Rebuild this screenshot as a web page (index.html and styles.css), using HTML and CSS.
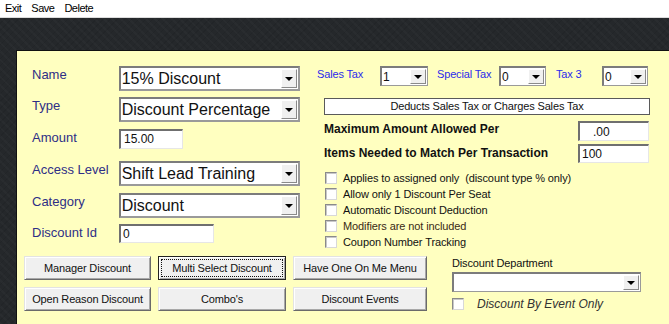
FILE: index.html
```html
<!DOCTYPE html>
<html lang="en">
<head>
  <meta charset="UTF-8">
  <title>Discount Setup</title>
  <link rel="stylesheet" href="styles.css">
</head>
<body>
  <div class="menubar">
    <span>Exit</span>
    <span>Save</span>
    <span>Delete</span>
  </div>

  <div class="desk">
    <div class="panel">
      <div class="top">
        <div class="form">
          <div class="row r-name">
            <label>Name</label>
            <div class="combo big"><span>15% Discount</span><i class="drop"></i></div>
          </div>
          <div class="row r-type">
            <label>Type</label>
            <div class="combo big"><span>Discount Percentage</span><i class="drop"></i></div>
          </div>
          <div class="row r-amount">
            <label>Amount</label>
            <div class="input amount">15.00</div>
          </div>
          <div class="row r-access">
            <label>Access Level</label>
            <div class="combo big"><span>Shift Lead Training</span><i class="drop"></i></div>
          </div>
          <div class="row r-cat">
            <label>Category</label>
            <div class="combo big"><span>Discount</span><i class="drop"></i></div>
          </div>
          <div class="row r-id">
            <label>Discount Id</label>
            <div class="input disc-id">0</div>
          </div>
        </div>

        <div class="side">
          <div class="taxes">
            <span class="tax-label w-sales">Sales Tax</span>
            <div class="combo small w48"><span>1</span><i class="drop"></i></div>
            <span class="tax-label w-special">Special Tax</span>
            <div class="combo small w47"><span>0</span><i class="drop"></i></div>
            <span class="tax-label w-tax3">Tax 3</span>
            <div class="combo small w46"><span>0</span><i class="drop"></i></div>
          </div>

          <div class="notice">Deducts Sales Tax or Charges Sales Tax</div>

          <div class="limit r-max">
            <b>Maximum Amount Allowed Per</b>
            <div class="input limit-box pad">.00</div>
          </div>
          <div class="limit r-items">
            <b>Items Needed to Match Per Transaction</b>
            <div class="input limit-box">100</div>
          </div>

          <ul class="checks">
            <li><i class="check"></i>Applies to assigned only&nbsp; (discount type % only)</li>
            <li><i class="check"></i>Allow only 1 Discount Per Seat</li>
            <li><i class="check"></i>Automatic Discount Deduction</li>
            <li><i class="check"></i>Modifiers are not included</li>
            <li><i class="check"></i>Coupon Number Tracking</li>
          </ul>
        </div>
      </div>

      <div class="bottom">
        <div class="buttons">
          <button>Manager Discount</button>
          <button class="focused">Multi Select Discount</button>
          <button>Have One On Me Menu</button>
          <button>Open Reason Discount</button>
          <button>Combo's</button>
          <button>Discount Events</button>
        </div>

        <div class="dept">
          <div class="dept-label">Discount Department</div>
          <div class="combo small dept-combo"><span></span><i class="drop"></i></div>
          <div class="event-only">
            <i class="check"></i>
            <em>Discount By Event Only</em>
          </div>
        </div>
      </div>
    </div>
  </div>
</body>
</html>
```

FILE: styles.css
```css
:root {
  --panel-bg: #ffffc0;
  --desk-bg: #25282b;
  --label-navy: #2e2e86;
  --label-blue: #2b2bec;
  --face: #f0f0f0;
}

* {
  box-sizing: border-box;
}

body {
  margin: 0;
  height: 100vh;
  overflow: hidden;
  font-family: "Liberation Sans", Arial, sans-serif;
  color: #111;
  display: flex;
  flex-direction: column;
}

/* small windows-style text */
.menubar,
.tax-label,
.notice,
.checks,
button,
.dept-label {
  font-size: 11px;
  letter-spacing: -0.15px;
}

/* menu */
.menubar {
  height: 18px;
  background: #fff;
  border-bottom: 1px solid #dcdcdc;
  display: flex;
  gap: 10px;
  padding: 2px 0 0 5px;
  line-height: 13px;
  letter-spacing: -0.5px;
  color: #000;
}

.desk {
  flex: 1;
  display: flex;
  flex-direction: column;
  padding: 32px 0 0 16px;
  background: var(--desk-bg);
  background-image: repeating-linear-gradient(45deg, rgba(255,255,255,0.02) 0 2px, transparent 2px 6px),
                    repeating-linear-gradient(-45deg, rgba(0,0,0,0.08) 0 1px, transparent 1px 5px);
}

.panel {
  flex: 1;
  background: var(--panel-bg);
  border: 1px solid #111;
  border-right: none;
  border-bottom: none;
  padding-top: 15px;
}

.top {
  display: flex;
  height: 190px;
}

/* left form */
.form {
  width: 268px;
  margin-left: 15px;
  margin-right: 17px;
}

.row {
  display: flex;
  align-items: flex-start;
}

.row label {
  width: 87px;
  font-size: 13px;
  line-height: 15px;
  padding-top: 1px;
  color: var(--label-navy);
}

.r-type { margin-top: 6px; }
.r-amount { margin-top: 7px; }
.r-access { margin-top: 12px; }
.r-cat { margin-top: 7px; }
.r-id { margin-top: 6px; }

/* combo boxes */
.combo {
  background: #fff;
  border: 2px solid #9a9a9a;
  border-top-color: #7c7c7c;
  border-left-color: #7c7c7c;
  display: flex;
  align-items: center;
  overflow: hidden;
}

.combo span {
  flex: 1;
  white-space: nowrap;
  padding-left: 1px;
}

.combo.big {
  width: 182px;
  height: 25px;
  font-size: 16px;
}

.combo.small {
  height: 20px;
  font-size: 12px;
  border-width: 2px 1px 1px 2px;
}

.w48 { width: 48px; }
.w47 { width: 47px; }
.w46 { width: 46px; }

.drop {
  align-self: stretch;
  width: 16px;
  margin: 1px 1px 1px 0;
  background: var(--face);
  border: 1px solid;
  border-color: #fff #8a8a8a #8a8a8a #fff;
  display: flex;
  align-items: center;
  justify-content: center;
}

.drop::after {
  content: "";
  border-left: 4px solid transparent;
  border-right: 4px solid transparent;
  border-top: 4px solid #000;
  margin-top: 1px;
}

/* text boxes */
.input {
  background: #fff;
  border: 1px solid #e6e6e6;
  border-top: 2px solid #6f6f6f;
  border-left: 2px solid #6f6f6f;
  font-size: 12px;
  line-height: 16px;
  padding-left: 2px;
  white-space: nowrap;
}

.amount {
  width: 64px;
  height: 20px;
  padding-left: 3px;
}

.disc-id {
  width: 95px;
  height: 19px;
}

/* right side */
.side {
  width: 333px;
}

.taxes {
  display: flex;
  align-items: flex-start;
  height: 20px;
}

.tax-label {
  line-height: 14px;
  padding-top: 1px;
  white-space: nowrap;
  color: var(--label-blue);
}

.w-sales { width: 63px; }
.w-special { width: 62px; margin-left: 9px; }
.w-tax3 { width: 46px; margin-left: 10px; }

.notice {
  margin: 12px 0 0 7px;
  width: 326px;
  height: 17px;
  background: #fff;
  border: 1px solid #5a5a5a;
  text-align: center;
  line-height: 15px;
}

.limit {
  display: flex;
  justify-content: space-between;
  align-items: flex-start;
  padding-left: 7px;
  padding-right: 1px;
}

.limit b {
  font-size: 12px;
  line-height: 14px;
}

.r-max { margin-top: 6px; }
.r-max b { padding-top: 1px; }
.r-items { margin-top: 3px; }
.r-items b { padding-top: 2px; }

.limit-box {
  width: 71px;
  height: 20px;
}

.limit-box.pad {
  padding-left: 13px;
  padding-top: 1px;
}

.r-items .limit-box {
  height: 19px;
}

.checks {
  list-style: none;
  margin: 7px 0 0 8px;
  padding: 0;
  letter-spacing: -0.1px;
}

.checks li {
  display: flex;
  align-items: center;
  height: 16px;
  gap: 6px;
  line-height: 14px;
}

.check {
  width: 12px;
  height: 12px;
  background: #fff;
  border: 1px solid #d8d8d8;
  border-top-color: #8a8a8a;
  border-left-color: #8a8a8a;
  box-shadow: inset 1px 1px 0 #c8c8c8;
  flex: none;
}

.checks li:nth-child(4) {
  color: #3a2a14;
}

/* bottom area */
.bottom {
  display: flex;
  padding-left: 7px;
}

.buttons {
  display: grid;
  grid-template-columns: 127px 128px 134px;
  grid-auto-rows: 24px;
  column-gap: 7px;
  row-gap: 7px;
}

button {
  font-family: "Liberation Sans", Arial, sans-serif;
  color: #111;
  background: var(--face);
  border: 1px solid;
  border-color: #e3e3e3 #6a6a6a #6a6a6a #e3e3e3;
  box-shadow: inset 1px 1px 0 #fff, inset -1px -1px 0 #a8a8a8;
  padding: 0;
  white-space: nowrap;
  cursor: pointer;
}

button.focused {
  border-color: #222;
  outline: 1px dotted #111;
  outline-offset: -4px;
}

.dept {
  margin-left: 25px;
  width: 189px;
}

.dept-label {
  line-height: 15px;
}

.dept-combo {
  width: 189px;
  margin-top: 1px;
  height: 19px;
}

.event-only {
  display: flex;
  align-items: center;
  margin-top: 6px;
  height: 12px;
}

.event-only em {
  margin-left: 13px;
  font-size: 12px;
  color: #333;
}
```
